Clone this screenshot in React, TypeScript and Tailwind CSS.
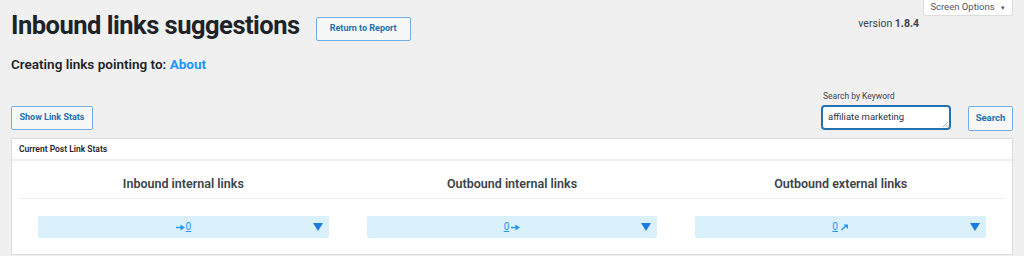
import React from "react"

const Arrow = ({ diag = false }: { diag?: boolean }) => (
  <svg width="9" height="7" viewBox="0 0 9 7" className="inline-block">
    {diag ? (
      <g fill="#2196f3">
        <path d="M1.5 6 L6 1.5" stroke="#2196f3" strokeWidth="1.4" />
        <polygon points="3.5,0.5 8,0.5 8,5" />
      </g>
    ) : (
      <g fill="#2196f3">
        <rect x="0" y="2.8" width="5" height="1.4" />
        <polygon points="4.5,0.5 9,3.5 4.5,6.5" />
      </g>
    )}
  </svg>
)

const Caret = () => (
  <svg width="10" height="8" viewBox="0 0 10 8" className="absolute right-[6px] top-[7px]">
    <polygon points="0,0 10,0 5,8" fill="#1a7be0" />
  </svg>
)

const StatBar = ({ kind }: { kind: "in" | "out" | "ext" }) => (
  <div className="relative mx-[19px] h-[22px] bg-[#daf1fc] rounded-[2px] flex items-center justify-center text-[10px] text-[#2196f3] leading-none">
    {kind === "in" && (
      <span className="flex items-center gap-[1px]">
        <Arrow />
        <span className="underline">0</span>
      </span>
    )}
    {kind === "out" && (
      <span className="flex items-center gap-[2px]">
        <span className="underline">0</span>
        <Arrow />
      </span>
    )}
    {kind === "ext" && (
      <span className="flex items-center gap-[2px]">
        <span className="underline">0</span>
        <Arrow diag />
      </span>
    )}
    <Caret />
  </div>
)

export default function App() {
  return (
    <div className="relative w-[1024px] h-[256px] overflow-hidden bg-[#f0f0f1] font-['Roboto',sans-serif] text-[#1d2327]">
      <div className="absolute top-0 right-[11px] w-[90px] h-[16px] bg-white border border-t-0 border-[#dcdcde] rounded-b-[3px] flex items-center justify-center gap-[5px] text-[9.5px] text-[#50575e]">
        Screen Options
        <span className="text-[6px]">▼</span>
      </div>

      <div className="px-[11px]">
        <div className="flex items-start">
          <h1 className="mt-[9px] text-[25.5px] leading-[32px] font-bold tracking-[-0.5px]">Inbound links suggestions</h1>
          <button className="ml-[16px] mt-[17px] w-[95px] h-[24px] border border-[#72aee6] rounded-[2px] bg-[#f6f7f7] text-[9px] font-bold text-[#2271b1]">
            Return to Report
          </button>
          <div className="ml-auto mr-[94px] mt-[16px] text-[10.5px] text-[#3c434a]">
            version <span className="font-bold">1.8.4</span>
          </div>
        </div>

        <div className="mt-[13px] text-[13.5px] leading-[20px] font-semibold text-[#1d2327]">
          Creating links pointing to: <span className="text-[#2196f3] font-bold">About</span>
        </div>

        <div className="mt-[17px] flex items-end">
          <button className="mb-[1px] w-[82px] h-[24px] border border-[#72aee6] rounded-[2px] bg-[#f6f7f7] text-[9px] font-bold text-[#2271b1]">
            Show Link Stats
          </button>
          <div className="ml-auto flex items-end gap-[18px]">
            <div className="flex flex-col">
              <label className="text-[8.5px] leading-[10px] text-[#3c434a] mb-[5px] ml-[1px]">Search by Keyword</label>
              <div className="relative w-[128px] h-[23px] bg-white border border-[#2271b1] rounded-[3px] shadow-[0_0_0_1px_#2271b1] px-[5px] pt-[3px] text-[9.5px] text-[#2c3338] mb-[2px]">
                affiliate marketing
                <svg width="5" height="5" viewBox="0 0 5 5" className="absolute right-[1px] bottom-[1px]">
                  <path d="M0 5 L5 0 M2.5 5 L5 2.5" stroke="#8c8f94" strokeWidth="0.7" />
                </svg>
              </div>
            </div>
            <button className="w-[45px] h-[25px] border border-[#72aee6] rounded-[2px] bg-[#f6f7f7] text-[9.5px] font-bold text-[#2271b1]">
              Search
            </button>
          </div>
        </div>

        <div className="mt-[7px] bg-white border border-[#dcdcde]">
          <div className="h-[22px] px-[7px] flex items-center border-b-[2px] border-[#f0f0f1] text-[8.5px] font-semibold text-[#1d2327]">
            Current Post Link Stats
          </div>
          <div className="px-[7px]">
            <div className="grid grid-cols-3 h-[38px] items-center border-b border-[#f0f0f1] text-[12.5px] font-semibold text-[#3c434a] text-center pt-[10px]">
              <div>Inbound internal links</div>
              <div>Outbound internal links</div>
              <div>Outbound external links</div>
            </div>
            <div className="grid grid-cols-3 pt-[17px] pb-[16px]">
              <StatBar kind="in" />
              <StatBar kind="out" />
              <StatBar kind="ext" />
            </div>
          </div>
        </div>
      </div>
    </div>
  )
}
